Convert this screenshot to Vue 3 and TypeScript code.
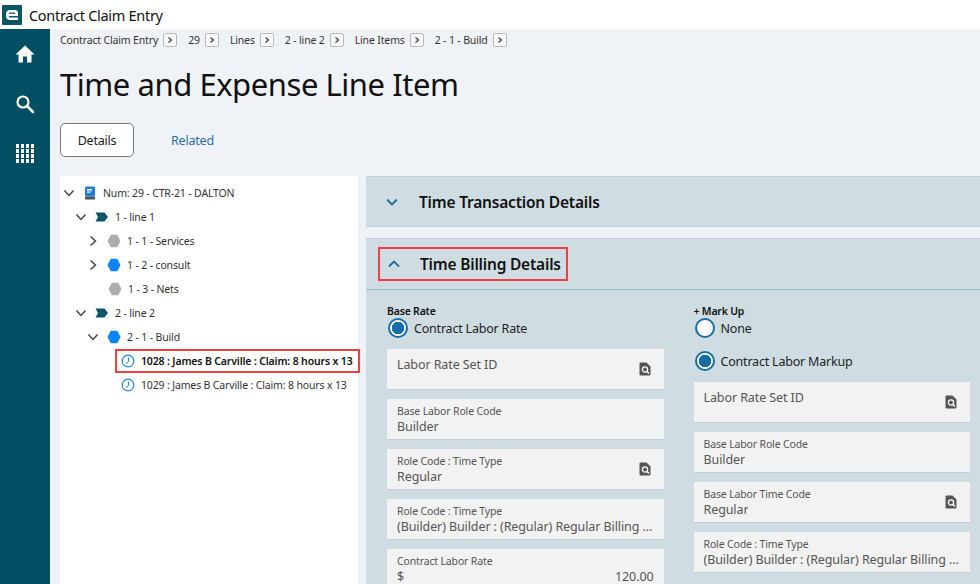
<template>
  <div class="app">
    <header class="topbar">
      <svg class="logo" viewBox="0 0 20 20" width="20" height="20">
        <rect width="20" height="20" rx="1" fill="#0b5566" />
        <path d="M4 9.2C4 6 6 5 8 5h5c2 0 3 1.4 3 3.2V11H6.8c.1 1 .6 1.6 1.8 1.6H16V15H8c-2.600 0-4-1.500-4-4zM6.800 8.800h6.600c0-.9-.4-1.400-1.200-1.400H8.200c-.9 0-1.300.5-1.400 1.400z" fill="#fff" />
      </svg>
      <span class="app-name">Contract Claim Entry</span>
    </header>
    <div class="body">
      <nav class="sidebar">
        <svg viewBox="0 0 20 20" width="20" height="20">
          <path d="M10 1.500 0.500 10.500h3V18.500h4.500v-6h4v6h4.500V10.500h3z" fill="#fff" />
        </svg>
        <svg viewBox="0 0 20 20" width="20" height="20">
          <circle cx="8" cy="8" r="5.500" fill="none" stroke="#fff" stroke-width="2.200" />
          <path d="M12 12l6 6" stroke="#fff" stroke-width="2.600" stroke-linecap="round" />
        </svg>
        <div class="waffle">
          <i v-for="n in 16" :key="n"></i>
        </div>
      </nav>
      <main class="main">
        <div class="crumbs">
          <template v-for="c in crumbs" :key="c">
            <span>{{ c }}</span>
            <b class="crumb-btn">
              <svg viewBox="0 0 8 8" width="8" height="8"><path d="M2.500 1.500 5.500 4l-3 2.500" fill="none" stroke="#333" stroke-width="1.100" /></svg>
            </b>
          </template>
        </div>
        <h1>Time and Expense Line Item</h1>
        <div class="tabs">
          <button class="tab-active">Details</button>
          <a class="tab-link">Related</a>
        </div>
        <div class="columns">
          <section class="tree">
            <div v-for="row in treeRows" :key="row.label" class="tree-row" :class="{ selected: row.selected }" :style="{ paddingLeft: row.indent + 'px' }">
              <svg v-if="row.caret" class="caret" viewBox="0 0 12 12" width="12" height="12">
                <path :d="row.caret === 'down' ? 'M1.500 3.500 6 8.500l4.500-5' : 'M3.500 1.500 8.500 6l-5 4.500'" fill="none" stroke="#444" stroke-width="1.500" />
              </svg>
              <svg v-if="row.icon === 'book'" class="node-icon" viewBox="0 0 14 14" width="14" height="14">
                <rect x="2" y="0.500" width="10" height="10" rx="1.500" fill="#1e7fd6" />
                <rect x="4" y="3" width="5" height="1.500" fill="#fff" />
                <rect x="4" y="5.500" width="3.500" height="1.200" fill="#fff" />
                <rect x="2" y="10.500" width="10" height="3" rx="0.500" fill="#4a5560" />
              </svg>
              <svg v-else-if="row.icon === 'tag'" class="node-icon" viewBox="0 0 14 10" width="14" height="10">
                <path d="M0.500 0.500h9L13 5 9.500 9.500h-9L3 5z" fill="#0b5566" />
              </svg>
              <svg v-else-if="row.icon === 'clock'" class="node-icon" viewBox="0 0 14 14" width="14" height="14">
                <circle cx="7" cy="7" r="5.800" fill="#fff" stroke="#1e86e8" stroke-width="1.200" />
                <path d="M7.500 3.500V7.500L5 9.500" fill="none" stroke="#1e86e8" stroke-width="1" />
              </svg>
              <svg v-else class="node-icon" viewBox="0 0 14 14" width="14" height="14">
                <path d="M3.800 0.800h6.400L13.500 7l-3.300 6.200H3.800L0.500 7z" :fill="row.icon === 'hexBlue' ? '#0a84ff' : '#adadad'" />
              </svg>
              <span>{{ row.label }}</span>
            </div>
          </section>
          <section class="panels">
            <div class="panel panel-closed">
              <svg class="chev" viewBox="0 0 14 10" width="14" height="10"><path d="M2 2.500 7 7.500l5-5" fill="none" stroke="#1b6f9c" stroke-width="1.800" /></svg>
              <h2>Time Transaction Details</h2>
            </div>
            <div class="panel panel-open">
              <div class="panel-head">
                <div class="marked">
                  <svg class="chev" viewBox="0 0 14 10" width="14" height="10"><path d="M2 7.500 7 2.500l5 5" fill="none" stroke="#1b6f9c" stroke-width="1.800" /></svg>
                  <h2>Time Billing Details</h2>
                </div>
              </div>
              <div class="form">
                <div v-for="col in formCols" :key="col.title" class="form-col">
                  <div class="group-title">{{ col.title }}</div>
                  <label v-for="r in col.radios" :key="r.label" class="radio">
                    <i class="dot" :class="{ on: r.on }"></i>
                    <span>{{ r.label }}</span>
                  </label>
                  <div v-for="f in col.fields" :key="f.label + f.value" class="field" :class="{ empty: !f.value }">
                    <div class="field-label">{{ f.label }}</div>
                    <div v-if="f.value" class="field-value">
                      <span>{{ f.value }}</span>
                      <span v-if="f.amount">{{ f.amount }}</span>
                    </div>
                    <svg v-if="f.lookup" class="lookup" viewBox="0 0 12 14" width="12" height="14">
                      <path d="M1.500 0.500h6L11.500 4.500v8a1 1 0 0 1-1 1h-9a1 1 0 0 1-1-1v-11a1 1 0 0 1 1-1z" fill="#555" />
                      <circle cx="6" cy="7.500" r="2.600" fill="none" stroke="#fff" stroke-width="1.300" />
                      <path d="M8 9.500l2 2" stroke="#fff" stroke-width="1.400" />
                    </svg>
                  </div>
                </div>
              </div>
            </div>
          </section>
        </div>
      </main>
    </div>
  </div>
</template>

<script setup lang="ts">
type TreeRow = {
  label: string;
  indent: number;
  caret?: 'down' | 'right';
  icon: 'book' | 'tag' | 'hexGrey' | 'hexBlue' | 'clock';
  selected?: boolean;
};

type Field = {
  label: string;
  value?: string;
  amount?: string;
  lookup?: boolean;
};

const crumbs = ['Contract Claim Entry', '29', 'Lines', '2 - line 2', 'Line Items', '2 - 1 - Build'];

const treeRows: TreeRow[] = [
  { label: 'Num: 29 - CTR-21 - DALTON', indent: 3, caret: 'down', icon: 'book' },
  { label: '1 - line 1', indent: 15, caret: 'down', icon: 'tag' },
  { label: '1 - 1 - Services', indent: 27, caret: 'right', icon: 'hexGrey' },
  { label: '1 - 2 - consult', indent: 27, caret: 'right', icon: 'hexBlue' },
  { label: '1 - 3 - Nets', indent: 48, icon: 'hexGrey' },
  { label: '2 - line 2', indent: 15, caret: 'down', icon: 'tag' },
  { label: '2 - 1 - Build', indent: 27, caret: 'down', icon: 'hexBlue' },
  { label: '1028 : James B Carville : Claim: 8 hours x 13', indent: 61, icon: 'clock', selected: true },
  { label: '1029 : James B Carville : Claim: 8 hours x 13', indent: 61, icon: 'clock' },
];

const formCols: { title: string; radios: { label: string; on: boolean }[]; fields: Field[] }[] = [
  {
    title: 'Base Rate',
    radios: [{ label: 'Contract Labor Rate', on: true }],
    fields: [
      { label: 'Labor Rate Set ID', lookup: true },
      { label: 'Base Labor Role Code', value: 'Builder' },
      { label: 'Role Code : Time Type', value: 'Regular', lookup: true },
      { label: 'Role Code : Time Type', value: '(Builder) Builder : (Regular) Regular Billing Rate' },
      { label: 'Contract Labor Rate', value: '$', amount: '120.00' },
    ],
  },
  {
    title: '+ Mark Up',
    radios: [
      { label: 'None', on: false },
      { label: 'Contract Labor Markup', on: true },
    ],
    fields: [
      { label: 'Labor Rate Set ID', lookup: true },
      { label: 'Base Labor Role Code', value: 'Builder' },
      { label: 'Base Labor Time Code', value: 'Regular', lookup: true },
      { label: 'Role Code : Time Type', value: '(Builder) Builder : (Regular) Regular Billing Rate' },
    ],
  },
];
</script>

<style>
html,
body {
  margin: 0;
  height: 584px;
  overflow: hidden;
}
</style>

<style scoped>
.app {
  width: 980px;
  height: 584px;
  overflow: hidden;
  display: flex;
  flex-direction: column;
  font-family: "Noto Sans", "Open Sans", sans-serif;
  color: #222;
  background: #eff3f7;
}

.topbar {
  height: 29px;
  flex: none;
  display: flex;
  align-items: center;
  gap: 7px;
  padding-left: 2px;
  background: #fff;
}

.app-name {
  font-size: 14.500px;
  letter-spacing: -0.300px;
  color: #111;
}

.body {
  flex: 1;
  display: flex;
  min-height: 0;
}

.sidebar {
  width: 50px;
  flex: none;
  display: flex;
  flex-direction: column;
  align-items: center;
  gap: 30px;
  padding-top: 15px;
  box-sizing: border-box;
  background: #024f63;
}

.waffle {
  display: grid;
  grid-template-columns: repeat(4, 3.500px);
  gap: 1.500px;
}

.waffle i {
  height: 3.500px;
  background: #fff;
}

.main {
  flex: 1;
  min-width: 0;
  padding-left: 10px;
}

.crumbs {
  height: 22px;
  display: flex;
  align-items: center;
  font-size: 10.500px;
  letter-spacing: -0.150px;
  color: #333;
}

.crumb-btn {
  width: 12px;
  height: 12px;
  margin: 0 11px 0 5px;
  display: flex;
  align-items: center;
  justify-content: center;
  border: 1px solid #bbb;
  border-radius: 2px;
  background: #fafafa;
}

h1 {
  margin: 13px 0 0;
  height: 40px;
  font-size: 31px;
  line-height: 40px;
  font-weight: 400;
  letter-spacing: -0.450px;
  color: #111;
}

.tabs {
  margin-top: 19px;
  display: flex;
  align-items: center;
  gap: 37px;
  font-size: 12.500px;
  letter-spacing: -0.200px;
}

.tab-active {
  width: 74px;
  height: 34px;
  padding: 0;
  font: inherit;
  letter-spacing: inherit;
  color: #222;
  border: 1px solid #777;
  border-radius: 5px;
  background: #fff;
}

.tab-link {
  color: #2c6d9f;
}

.columns {
  margin-top: 19px;
  display: flex;
  gap: 8px;
}

.tree {
  width: 298px;
  height: 408px;
  flex: none;
  padding-top: 5px;
  box-sizing: border-box;
  background: #fff;
  font-size: 10.500px;
  letter-spacing: -0.150px;
  color: #333;
}

.tree-row {
  height: 24px;
  display: flex;
  align-items: center;
  white-space: nowrap;
}

.caret {
  margin-right: 8px;
}

.node-icon {
  margin-right: 6px;
  flex: none;
}

.selected {
  font-weight: 600;
  color: #111;
  position: relative;
}

.selected::after {
  content: "";
  position: absolute;
  left: 55px;
  right: -2px;
  top: 0;
  bottom: 0;
  border: 2px solid #f04040;
}

.panels {
  flex: 1;
  min-width: 0;
  display: flex;
  flex-direction: column;
  gap: 11px;
}

.panel {
  background: #cfdde3;
  border-top: 1px solid #c4cfd5;
}

.panel-closed {
  height: 51px;
  box-sizing: border-box;
  display: flex;
  align-items: center;
  padding-left: 19px;
  border-bottom: 1px solid #c4cfd5;
}

h2 {
  margin: 0 0 0 20px;
  font-size: 15.500px;
  font-weight: 600;
  letter-spacing: -0.200px;
  color: #111;
}

.panel-head {
  height: 50px;
  display: flex;
  align-items: center;
  padding-left: 12px;
  border-bottom: 1px solid #9bbccb;
}

.marked {
  height: 34px;
  width: 190px;
  box-sizing: border-box;
  display: flex;
  align-items: center;
  padding-left: 7px;
  border: 2px solid #f04040;
}

.marked h2 {
  margin-left: 19px;
}

.form {
  display: flex;
  padding: 14px 10px 0 21px;
  gap: 30px;
}

.form-col {
  width: 276.500px;
  flex: none;
}

.group-title {
  font-size: 10.500px;
  font-weight: 600;
  letter-spacing: -0.200px;
  line-height: 14px;
  color: #111;
}

.radio {
  display: flex;
  align-items: center;
  gap: 6px;
  height: 20px;
  margin-bottom: 14px;
  padding-left: 1px;
  font-size: 12.500px;
  letter-spacing: -0.200px;
  color: #222;
}

.radio:last-of-type {
  margin-bottom: 11px;
}

.radio + .radio {
  margin-top: -1px;
}

.dot {
  width: 20px;
  height: 20px;
  box-sizing: border-box;
  flex: none;
  border: 2px solid #156fa6;
  border-radius: 50%;
  background: #fff;
}

.dot.on {
  background: radial-gradient(circle, #156fa6 0 6px, #fff 6.500px);
}

.field {
  position: relative;
  height: 40px;
  margin-bottom: 10px;
  padding: 5px 10px 0;
  box-sizing: border-box;
  background: #f2f2f2;
  box-shadow: 0 1px 0 #c8cfd2;
  color: #555;
}

.field-label {
  font-size: 10.500px;
  line-height: 14px;
  letter-spacing: -0.150px;
}

.field.empty .field-label {
  font-size: 12.500px;
  line-height: 22px;
  letter-spacing: -0.100px;
}

.field-value {
  display: flex;
  justify-content: space-between;
  overflow: hidden;
  font-size: 12.500px;
  line-height: 18px;
  letter-spacing: -0.100px;
  white-space: nowrap;
}

.field-value span:first-child {
  overflow: hidden;
  text-overflow: ellipsis;
}

.lookup {
  position: absolute;
  right: 13px;
  top: 13px;
}
</style>
